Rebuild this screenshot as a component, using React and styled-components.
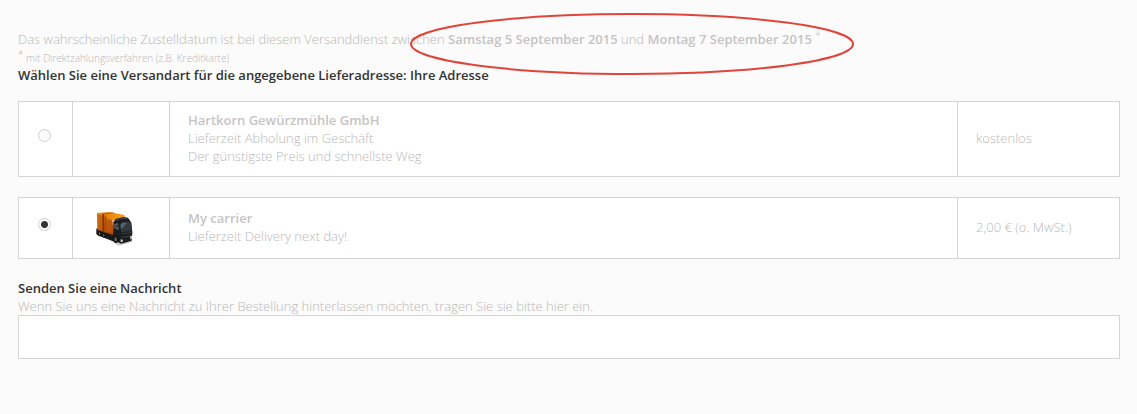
import React, {useState} from 'react'
import styled, {createGlobalStyle} from 'styled-components'

const GlobalStyle = createGlobalStyle`
  * {
    box-sizing: border-box;
  }

  body {
    margin: 0;
    background-color: #fbfbfb;
    color: #bab8b8;
    font-family: 'Open Sans', sans-serif;
    font-size: 13px;
    font-weight: 300;
    line-height: 18px;
  }
`

const Page = styled.main`
  padding: 30px 17px 30px 18px;
`

const Delivery = styled.section`
  position: relative;
  margin-bottom: 17px;
`

const Text = styled.p`
  margin: 0;
`

const Small = styled.small`
  font-size: 10px;
  line-height: 10px;
`

const Star = styled.sup`
  font-size: 10px;
  line-height: 0;
`

const Heading = styled.h2`
  margin: 0;
  color: #333;
  font-size: 13px;
  font-weight: 600;
  line-height: 18px;
`

const Strong = styled.strong`
  color: #c6c4c4;
  font-weight: 600;
`

const Marker = styled.svg`
  position: absolute;
  top: -18px;
  left: 392px;
  width: 444px;
  height: 64px;
  pointer-events: none;
`

const CarrierTable = styled.table`
  width: 100%;
  margin-bottom: 20px;
  border-collapse: collapse;
  table-layout: fixed;
  background-color: #fff;
`

const Cell = styled.td`
  width: ${(props) => props.$width || 'auto'};
  padding: ${(props) => (props.$narrow ? '11px 18px' : '9px 18px 11px')};
  border: 1px solid #d6d4d4;
  vertical-align: middle;
`

const Radio = styled.input`
  display: block;
  appearance: none;
  width: 13px;
  height: 13px;
  margin: 0 0 7px 1px;
  border: 1px solid #cfcfcf;
  border-radius: 50%;
  background-color: #fbfbfb;

  &:checked {
    background: radial-gradient(circle, #333 3px, #fff 4px);
  }
`

const CarrierLabel = styled.label`
  display: block;
`

const Truck = styled.svg`
  display: block;
  width: 48px;
  height: 38px;
`

const Message = styled.section`
  display: flex;
  flex-direction: column;
`

const MessageLabel = styled.label`
  display: block;
`

const TextArea = styled.textarea`
  display: block;
  width: 100%;
  height: 44px;
  padding: 6px 10px;
  border: 1px solid #d6d4d4;
  border-radius: 0;
  background-color: #fff;
  color: #777;
  font: inherit;
  resize: none;
  outline: none;
`

const TruckIcon = () => (
  <Truck viewBox='18 27 144 114' aria-hidden='true'>
    <defs>
      <linearGradient id='side' x1='0' y1='0' x2='1' y2='1'>
        <stop offset='0' stopColor='#d06c12' />
        <stop offset='1' stopColor='#b04c0a' />
      </linearGradient>
      <linearGradient id='roof' x1='0' y1='0' x2='1' y2='0'>
        <stop offset='0' stopColor='#d9720a' />
        <stop offset='1' stopColor='#f8a41c' />
      </linearGradient>
    </defs>
    <path d='M38 106 L84 124 L98 137 L142 126 L138 118 L84 108 Z' fill='#c9c9c6' />
    {/* chassis */}
    <path d='M34 86 L40 84 L86 96 L92 126 L84 124 L38 106 L34 102 Z' fill='#191a1c' />
    {/* container */}
    <path d='M36 39 L82 51 L86 106 L37 90 Z' fill='url(#side)' />
    <path d='M36 39 L74 36 L118 45 L121 52 L88 61 L62 52 Z' fill='url(#roof)' />
    <path d='M36 39 L58 42 L58 47 L37 43 Z' fill='#f08a18' />
    <path d='M52 41 L57 43 L58 97 L53 96 Z' fill='#803409' />
    <path d='M60 46 L63 47 L65 99 L62 98 Z' fill='#a64207' />
    <path d='M54 42 L86 38' stroke='#a04a08' strokeWidth='2' />
    <path d='M38 90 L84 104' stroke='#642b0b' strokeWidth='2' />
    <path d='M66 55 L86 61' stroke='#f08c1c' strokeWidth='2' />
    {/* cab */}
    <path d='M85 66 L92 57 L116 51 L129 53 L139 68 L142 98 L140 122 L109 131 L92 124 L84 108 Z' fill='#1b1e21' />
    <path d='M104 72 L112 65 L134 66 L139 76 L140 89 L108 92 Z' fill='#323a42' />
    <path d='M107 75 L114 68 L126 68 L112 84 L108 86 Z' fill='#59636c' />
    <path d='M88 73 L98 69 L102 89 L94 88 L88 84 Z' fill='#59655f' />
    <path d='M91 77 L97 74 L98 85 L92 82 Z' fill='#292e32' />
    <path d='M92 61 L114 55 L128 57' fill='none' stroke='#46494c' strokeWidth='3' />
    <path d='M109 95 L139 92 M111 101 L139 98 M112 112 L138 108' stroke='#4b5055' strokeWidth='2' />
    <path d='M107 118 L113 119 L113 126 L107 125 Z' fill='#f0e5bd' />
    <path d='M136 109 L141 107 L140 117 L136 118 Z' fill='#e8dfc0' />
    {/* wheels */}
    <ellipse cx='45' cy='101' rx='6' ry='8' fill='#111' />
    <ellipse cx='44' cy='101' rx='2' ry='4' fill='#777973' />
    <ellipse cx='57' cy='106' rx='5' ry='8' fill='#111' />
    <ellipse cx='56' cy='106' rx='2' ry='4' fill='#63645f' />
    <ellipse cx='93' cy='118' rx='8' ry='11' fill='#111' />
    <ellipse cx='92' cy='118' rx='3' ry='6' fill='#8b8d85' />
    <ellipse cx='92' cy='118' rx='1' ry='3' fill='#33342f' />
  </Truck>
)

const carriers = [
  {
    id: 'pickup',
    name: 'Hartkorn Gewürzmühle GmbH',
    lines: ['Lieferzeit Abholung im Geschäft', 'Der günstigste Preis und schnellste Weg'],
    price: 'kostenlos'
  },
  {
    id: 'carrier',
    name: 'My carrier',
    lines: ['Lieferzeit Delivery next day!'],
    price: '2,00 € (o. MwSt.)',
    hasLogo: true
  }
]

const Carrier = ({carrier, checked, onSelect}) => (
  <CarrierTable>
    <tbody>
      <tr>
        <Cell $width='54px' $narrow>
          <Radio
            type='radio'
            name='carrier'
            id={carrier.id}
            checked={checked}
            onChange={() => onSelect(carrier.id)}
          />
        </Cell>
        <Cell $width='97px' $narrow>
          {carrier.hasLogo && <TruckIcon />}
        </Cell>
        <Cell>
          <CarrierLabel htmlFor={carrier.id}>
            <Strong>{carrier.name}</Strong>
            {carrier.lines.map((line) => (
              <Text as='span' key={line}>
                <br />
                {line}
              </Text>
            ))}
          </CarrierLabel>
        </Cell>
        <Cell $width='162px'>{carrier.price}</Cell>
      </tr>
    </tbody>
  </CarrierTable>
)

const App = () => {
  const [selected, setSelected] = useState('carrier')

  return (
    <>
      <GlobalStyle />
      <Page>
        <Delivery>
          <Text>
            Das wahrscheinliche Zustelldatum ist bei diesem Versanddienst
            zwischen <Strong>Samstag 5 September 2015</Strong> und{' '}
            <Strong>Montag 7 September 2015</Strong> <Star>*</Star>
          </Text>
          <Text>
            <Small>
              <Star>*</Star> mit Direktzahlungsverfahren (z.B. Kreditkarte)
            </Small>
          </Text>
          <Heading>
            Wählen Sie eine Versandart für die angegebene Lieferadresse: Ihre
            Adresse
          </Heading>
          <Marker viewBox='0 0 444 64' aria-hidden='true'>
            <ellipse
              cx='222'
              cy='32'
              rx='221'
              ry='30'
              fill='none'
              stroke='#e0453a'
              strokeWidth='2'
            />
          </Marker>
        </Delivery>
        {carriers.map((carrier) => (
          <Carrier
            key={carrier.id}
            carrier={carrier}
            checked={selected === carrier.id}
            onSelect={setSelected}
          />
        ))}
        <Message>
          <Heading>Senden Sie eine Nachricht</Heading>
          <MessageLabel htmlFor='message'>
            Wenn Sie uns eine Nachricht zu Ihrer Bestellung hinterlassen
            möchten, tragen Sie sie bitte hier ein.
          </MessageLabel>
          <TextArea id='message' />
        </Message>
      </Page>
    </>
  )
}

export default App
